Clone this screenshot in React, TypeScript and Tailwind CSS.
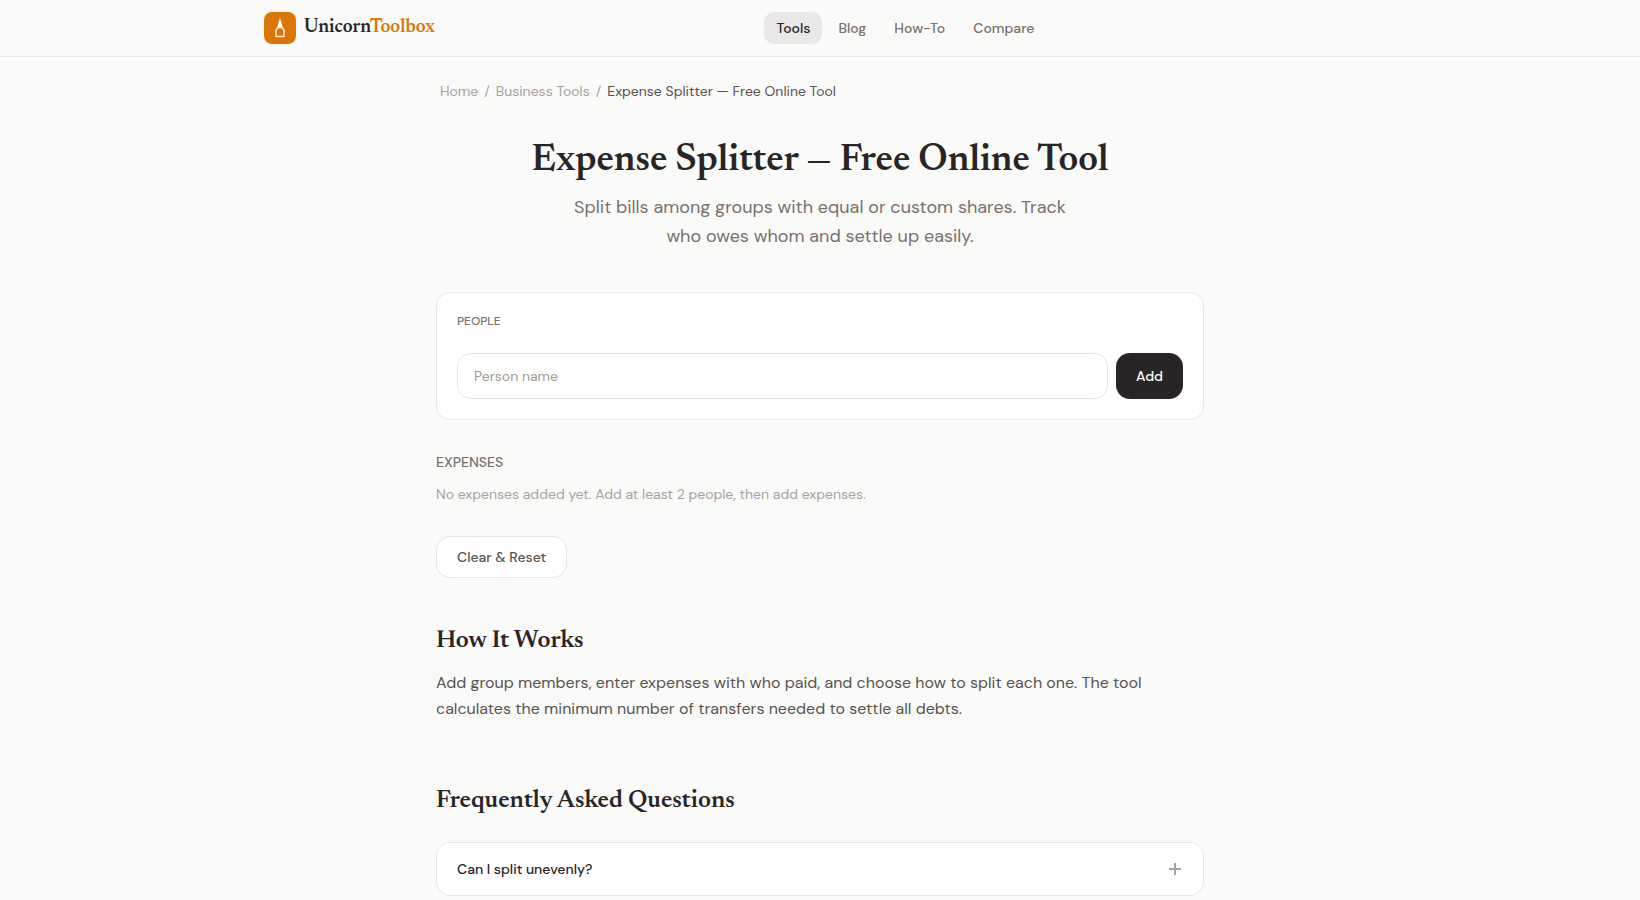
import React, { useState } from 'react';

const navLinks = [
  { label: 'Tools', href: '#tools', active: true },
  { label: 'Blog', href: '#blog', active: false },
  { label: 'How-To', href: '#how-to', active: false },
  { label: 'Compare', href: '#compare', active: false },
];

const faqs = [
  {
    question: 'Can I split unevenly?',
    answer: 'Yes. Choose custom shares when you add an expense.',
  },
];

const serif = "font-[Newsreader,'Liberation_Serif',serif] font-semibold";

const Logo: React.FC = () => (
  <a href="#home" className="flex items-center gap-2">
    <span className="flex h-8 w-8 items-center justify-center rounded-lg bg-[#d97706]">
      <svg width="20" height="20" viewBox="0 0 20 20" fill="none" aria-hidden="true">
        <path d="M10 0L12.8 9.5H7.2Z" fill="#fff" />
        <path
          d="M8 9.5L6 12V18.5H14V12L12 9.5Z"
          stroke="#fff"
          strokeOpacity="0.85"
          strokeWidth="1.5"
          strokeLinejoin="round"
        />
      </svg>
    </span>
    <span className={`${serif} text-[19px] leading-7 text-[#292524]`}>
      Unicorn<span className="text-[#d97706]">Toolbox</span>
    </span>
  </a>
);

const Header: React.FC = () => (
  <header className="border-b border-[#e7e5e4]">
    <div className="mx-auto flex h-14 max-w-6xl items-center px-5">
      <Logo />
      <nav className="mx-auto flex gap-1">
        {navLinks.map((link) => (
          <a
            key={link.label}
            href={link.href}
            className={`rounded-[10px] px-3 py-1.5 text-sm font-medium ${
              link.active ? 'bg-[#e9e8e6] text-[#292524]' : 'text-[#78716c]'
            }`}
          >
            {link.label}
          </a>
        ))}
      </nav>
    </div>
  </header>
);

const FaqItem: React.FC<{ question: string; answer: string }> = ({ question, answer }) => {
  const [open, setOpen] = useState(false);

  return (
    <div className="rounded-[14px] border border-[#e7e5e4] bg-white">
      <button
        type="button"
        aria-expanded={open}
        onClick={() => setOpen(!open)}
        className="flex w-full items-center justify-between px-5 py-4 text-left text-sm font-medium text-[#292524]"
      >
        {question}
        <svg
          viewBox="0 0 16 16"
          className={`h-4 w-4 text-[#a8a29e] ${open ? 'rotate-45' : ''}`}
          stroke="currentColor"
          strokeWidth="2"
          aria-hidden="true"
        >
          <path d="M8 2V14M2 8H14" />
        </svg>
      </button>
      {open && <p className="px-5 pb-4 text-sm text-[#57534e]">{answer}</p>}
    </div>
  );
};

export default function App() {
  const [name, setName] = useState('');
  const [people, setPeople] = useState<string[]>([]);

  const addPerson = (e: React.FormEvent) => {
    e.preventDefault();
    const trimmed = name.trim();
    if (!trimmed) return;
    setPeople((prev) => [...prev, trimmed]);
    setName('');
  };

  const reset = () => {
    setName('');
    setPeople([]);
  };

  return (
    <div className="min-h-screen bg-[#fafaf9] font-['DM_Sans',Inter,sans-serif] text-[#292524] antialiased">
      <Header />

      <main className="mx-auto max-w-3xl pt-6 pb-10">
        <nav aria-label="Breadcrumb" className="px-1">
          <ol className="flex gap-1.5 text-sm text-[#a8a29e]">
            <li><a href="#home">Home</a></li>
            <li>/</li>
            <li><a href="#business">Business Tools</a></li>
            <li>/</li>
            <li className="text-[#57534e]">Expense Splitter — Free Online Tool</li>
          </ol>
        </nav>

        <div className="mt-10 text-center">
          <h1 className={`${serif} text-[38px] leading-10`}>Expense Splitter — Free Online Tool</h1>
          <p className="mx-auto mt-3 max-w-lg text-lg leading-[29px] text-[#78716c]">
            Split bills among groups with equal or custom shares. Track who owes whom and settle up easily.
          </p>
        </div>

        {/* People */}
        <form onSubmit={addPerson} className="mt-[41px] rounded-[14px] border border-[#e7e5e4] bg-white p-5">
          <label htmlFor="person" className="block text-xs font-medium text-[#78716c] uppercase">
            People
          </label>
          {people.length > 0 && (
            <ul className="mt-3 flex flex-wrap gap-2 text-sm">
              {people.map((person, i) => (
                <li key={i} className="rounded-lg bg-[#f5f5f4] px-3 py-1">{person}</li>
              ))}
            </ul>
          )}
          <div className="mt-6 flex gap-2">
            <input
              id="person"
              type="text"
              value={name}
              onChange={(e) => setName(e.target.value)}
              placeholder="Person name"
              className="min-w-0 flex-1 rounded-[14px] border border-[#e7e5e4] bg-white px-4 py-3 text-sm placeholder:text-[#a09a95]"
            />
            <button type="submit" className="rounded-[14px] bg-[#292524] px-5 text-sm font-medium text-white">
              Add
            </button>
          </div>
        </form>

        {/* Expenses */}
        <section className="mt-8">
          <h2 className="text-sm font-medium text-[#78716c] uppercase">Expenses</h2>
          <p className="mt-3 text-sm text-[#a8a29e]">
            No expenses added yet. Add at least 2 people, then add expenses.
          </p>
          <button
            type="button"
            onClick={reset}
            className="mt-8 rounded-[14px] border border-[#e7e5e4] bg-white px-5 py-2.5 text-sm font-medium text-[#57534e]"
          >
            Clear &amp; Reset
          </button>
        </section>

        <section className="mt-12">
          <h2 className={`${serif} text-[25px] leading-8`}>How It Works</h2>
          <p className="mt-3 text-base leading-[26px] text-[#57534e]">
            Add group members, enter expenses with who paid, and choose how to split each one. The tool
            calculates the minimum number of transfers needed to settle all debts.
          </p>
        </section>

        <section className="mt-16">
          <h2 className={`${serif} text-[25px] leading-8`}>Frequently Asked Questions</h2>
          <div className="mt-6 space-y-3">
            {faqs.map((faq) => (
              <FaqItem key={faq.question} question={faq.question} answer={faq.answer} />
            ))}
          </div>
        </section>
      </main>
    </div>
  );
}
